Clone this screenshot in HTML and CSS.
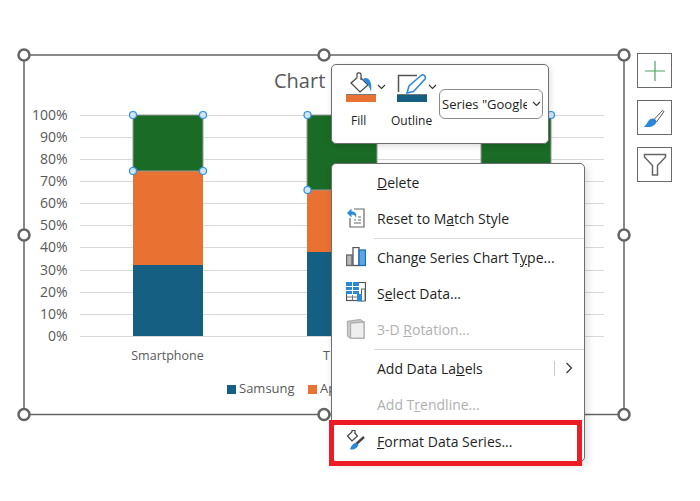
FILE: index.html
```html
<!DOCTYPE html>
<html lang="en">
<head>
<meta charset="utf-8">
<title>Chart context menu</title>
<link rel="stylesheet" href="styles.css">
</head>
<body>
<div class="stage">
  <svg class="chart" width="700" height="501" viewBox="0 0 700 501">
    <rect class="frame" x="24" y="55" width="600" height="359.5"/>
    <text class="title" x="274" y="88">Chart</text>
    <g class="grid">
      <path d="M80 115.500H604M80 137.500H604M80 159.500H604M80 181.500H604M80 203.500H604M80 225.500H604M80 247.500H604M80 270.500H604M80 292.500H604M80 314.500H604M80 336.500H604"/>
    </g>
    <g class="axis">
      <text x="67.500" y="119.500">100%</text><text x="67.500" y="141.500">90%</text><text x="67.500" y="164">80%</text>
      <text x="67.500" y="186">70%</text><text x="67.500" y="208">60%</text><text x="67.500" y="230">50%</text>
      <text x="67.500" y="252">40%</text><text x="67.500" y="275">30%</text><text x="67.500" y="297">20%</text>
      <text x="67.500" y="319">10%</text><text x="67.500" y="341">0%</text>
    </g>
    <rect class="c-green" x="133" y="115" width="70" height="56"/>
    <rect class="c-orange" x="133" y="171" width="70" height="94"/>
    <rect class="c-blue" x="133" y="265" width="70" height="71"/>
    <rect class="c-green" x="307" y="115" width="70" height="75"/>
    <rect class="c-orange" x="307" y="190" width="70" height="62"/>
    <rect class="c-blue" x="307" y="252" width="70" height="84"/>
    <rect class="c-green" x="481" y="115" width="70" height="60"/>
    <rect class="sel" x="133" y="115" width="70" height="56"/>
    <rect class="sel" x="307" y="115" width="70" height="75"/>
    <rect class="sel" x="481" y="115" width="70" height="60"/>
    <text class="cat" x="167.500" y="360">Smartphone</text>
    <text class="cat-start" x="323" y="360">T</text>
    <rect class="c-blue" x="227" y="385" width="9" height="9"/>
    <text class="legend" x="239" y="393">Samsung</text>
    <rect class="c-orange" x="308" y="385" width="9" height="9"/>
    <text class="legend" x="320" y="393">Apple</text>
    <g class="pt">
      <circle cx="133" cy="115" r="3.500"/><circle cx="203" cy="115" r="3.500"/>
      <circle cx="133" cy="171" r="3.500"/><circle cx="203" cy="171" r="3.500"/>
      <circle cx="307.500" cy="115" r="3.500"/><circle cx="307.500" cy="190" r="3.500"/>
      <circle cx="551" cy="115" r="3.500"/>
    </g>
    <g class="hd">
      <circle cx="24" cy="55" r="5.500"/><circle cx="324" cy="55" r="5.500"/><circle cx="624" cy="55" r="5.500"/>
      <circle cx="24" cy="235" r="5.500"/><circle cx="624" cy="235" r="5.500"/>
      <circle cx="24" cy="414.500" r="5.500"/><circle cx="324" cy="414.500" r="5.500"/><circle cx="624" cy="414.500" r="5.500"/>
    </g>
  </svg>

  <div class="side">
    <div class="side-btn">
      <svg width="22" height="22" viewBox="0 0 22 22"><path class="s-plus" d="M11 1V21M1 11H21"/></svg>
    </div>
    <div class="side-btn">
      <svg width="26" height="26" viewBox="0 0 26 26"><path class="s-handle" d="M11.500 15L20.500 5.500L22 6.500L14.500 17"/><path class="s-brush" d="M1.500 21.500C5 20.500 5 16 8.500 14C11 12.500 14 14 14.500 16.500C14 20 10 22 6 22C4 22 2.500 22 1.500 21.500Z"/></svg>
    </div>
    <div class="side-btn">
      <svg width="26" height="26" viewBox="0 0 26 26"><path class="s-filter" d="M2.500 2.500H23.500V5L15.500 13.500V23H10.500V13.500L2.500 5Z"/></svg>
    </div>
  </div>

  <div class="mini">
    <div class="tool">
      <div class="tool-top">
        <svg class="tool-icon" width="32" height="32" viewBox="0 0 32 32">
          <path class="i-dark" d="M5 11L13 4L22 13L14 20Z"/>
          <path class="i-dark" d="M11 5.500V2C11 .5 15 .5 15 2V8"/>
          <path class="i-blue" d="M17 7C21 4 27 8 25 20C24 15 21 11 19 9.500Z"/>
          <rect class="c-orange" x="0" y="22" width="30" height="8"/>
          <rect class="i-grey" x="0" y="22" width="30" height="1"/>
        </svg>
        <svg class="chev" width="9" height="6" viewBox="0 0 9 6"><path d="M1 1L4.500 4.500L8 1"/></svg>
      </div>
      <span class="tool-label">Fill</span>
    </div>
    <div class="tool tool-outline">
      <div class="tool-top">
        <svg class="tool-icon" width="32" height="32" viewBox="0 0 32 32">
          <path class="i-frame-d" d="M1.500 20V3.500H20"/>
          <path class="i-pen" d="M10 21L12 14L24 3.500C26 1.500 29.500 4 28 7L16.500 19.500Z"/>
          <rect class="c-blue" x="0" y="22" width="30" height="8"/>
          <rect class="i-grey" x="0" y="22" width="30" height="1"/>
        </svg>
        <svg class="chev" width="9" height="6" viewBox="0 0 9 6"><path d="M1 1L4.500 4.500L8 1"/></svg>
      </div>
      <span class="tool-label">Outline</span>
    </div>
    <div class="series">
      <span class="series-text">Series "Google</span>
      <svg class="chev" width="9" height="6" viewBox="0 0 9 6"><path d="M1 1L4.500 4.500L8 1"/></svg>
    </div>
  </div>

  <div class="menu">
    <div class="item"><span class="ic"></span><span><u>D</u>elete</span></div>
    <div class="item">
      <span class="ic"><svg width="20" height="20" viewBox="0 0 20 20"><path class="i-frame" d="M8 1H18V19H4V10"/><path class="i-bluefill" d="M1 5L5.500 .5V3.500C9.500 3.500 11 6 10 10C9.500 7.500 8 6.500 5.500 6.500V9.500Z"/><path class="i-frame" d="M12 9H15M8 12H10M12 12H15M8 15H15"/></svg></span>
      <span>Reset to M<u>a</u>tch Style</span>
    </div>
    <div class="sep"></div>
    <div class="item">
      <span class="ic"><svg width="20" height="20" viewBox="0 0 20 20"><rect class="i-bar-g" x="0.500" y="8" width="5.500" height="10.500"/><rect class="i-bar-w" x="7" y="0.500" width="6" height="18"/><rect class="i-bar-b" x="13" y="3" width="6.500" height="15.500"/></svg></span>
      <span>Change Series Chart T<u>y</u>pe...</span>
    </div>
    <div class="item">
      <span class="ic"><svg class="ic-up" width="20" height="20" viewBox="0 0 20 20"><rect class="i-tbl" x="0.500" y="0.500" width="19" height="18"/><rect class="i-bluefill" x="0" y="0" width="13" height="12"/><path class="i-white" d="M0 4.500H13M0 8.500H13M6.500 0V12"/><path class="i-tbl-l" d="M1 15H11M6.500 13V18"/><rect class="i-white-f" x="15.500" y="7" width="3.500" height="12"/><rect class="i-bluefill" x="11" y="12" width="5" height="7.500"/></svg></span>
      <span>S<u>e</u>lect Data...</span>
    </div>
    <div class="item off">
      <span class="ic"><svg width="20" height="20" viewBox="0 0 20 20"><path class="i-3d" d="M1.500 2.500L14 .5L18 3V19L5 19.500L1.500 17Z"/><path class="i-3d-f" d="M4.500 4L18 3V19L4.500 19.500Z"/></svg></span>
      <span>3-D <u>R</u>otation...</span>
    </div>
    <div class="sep"></div>
    <div class="item">
      <span class="ic"></span><span class="grow">Add Data La<u>b</u>els</span>
      <span class="sub"><svg width="8" height="12" viewBox="0 0 8 12"><path d="M1.500 1L6.500 6L1.500 11"/></svg></span>
    </div>
    <div class="item off"><span class="ic"></span><span>Add T<u>r</u>endline...</span></div>
    <div class="item item-last">
      <span class="ic"><svg width="22" height="22" viewBox="0 0 22 22"><path class="i-dark2" d="M1.500 6L7 1L11.500 6L6 11Z"/><path class="i-dark2" d="M6 2V.5H9V4"/><path class="i-stem" d="M8 16L18 7"/><path class="i-bluefill" d="M4 19.500C5 16 7 13 10 13C12 13.500 13 15 12 16C10 19 7 20 4 19.500Z"/></svg></span>
      <span><u>F</u>ormat Data Series...</span>
    </div>
  </div>
  <div class="callout"></div>
</div>
</body>
</html>
```
FILE: styles.css
```css
* { box-sizing: border-box; }
html, body { margin: 0; padding: 0; background: #fff; }
body { width: 700px; height: 501px; overflow: hidden; font-family: "Open Sans", "Noto Sans", sans-serif; }
.stage { position: relative; width: 700px; height: 501px; overflow: hidden; }
.chart { display: block; }
.frame { fill: #fff; stroke: #646464; stroke-width: 1.5; }
.title { font: 20px "Open Sans", sans-serif; fill: #595959; }
.grid path { stroke: #d9d9d9; stroke-width: 1; fill: none; }
.axis text { font: 14px "Open Sans", sans-serif; fill: #595959; text-anchor: end; }
.cat { font: 12.500px "Open Sans", sans-serif; fill: #595959; text-anchor: middle; }
.cat-start { font: 12.500px "Open Sans", sans-serif; fill: #595959; }
.legend { font: 13px "Open Sans", sans-serif; fill: #595959; }
.c-green { fill: #1a6b26; }
.c-orange { fill: #e97132; }
.c-blue { fill: #156082; }
.sel { fill: none; stroke: #999; stroke-width: 1; }
.pt circle { fill: #cfe6fa; stroke: #2f8fe0; stroke-width: 1.2; }
.hd circle { fill: #fff; stroke: #646464; stroke-width: 2.500; }

.side { position: absolute; left: 637px; top: 53px; display: flex; flex-direction: column; gap: 12px; }
.side-btn { width: 35px; height: 35px; border: 1px solid #6a6a6a; background: #fff; display: flex; align-items: center; justify-content: center; }
.s-plus { stroke: #4aa564; stroke-width: 1.200; fill: none; }
.s-handle { fill: #fff; stroke: #555; stroke-width: 1; }
.s-brush { fill: #2b88d8; }
.s-filter { fill: #fff; stroke: #666; stroke-width: 1.500; }

.mini { position: absolute; left: 331px; top: 64px; width: 218px; height: 80px; background: #fff; border: 1px solid #6e6e6e; border-radius: 5px; display: flex; align-items: flex-start; padding: 7px 4px 0 14px; box-shadow: 1px 2px 6px rgba(0,0,0,.14); }
.tool { display: flex; flex-direction: column; align-items: flex-start; width: 51px; }
.tool-outline { width: 41px; }
.tool-top { display: flex; align-items: center; }
.tool-icon { display: block; flex: none; }
.tool-top .chev { margin-left: -1px; margin-top: -2px; flex: none; }
.tool-label { font-size: 12px; line-height: 17px; color: #222; margin-top: 8px; margin-left: 5px; }
.tool-outline .tool-label { margin-left: -6px; }
.i-dark { fill: #fff; stroke: #444; stroke-width: 1.200; }
.i-frame-d { fill: none; stroke: #555; stroke-width: 1.500; }
.i-blue { fill: #2b88d8; }
.i-grey { fill: #777; }
.i-pen { fill: #fff; stroke: #2b88d8; stroke-width: 1.500; }
.chev { fill: none; stroke: #333; stroke-width: 1.100; display: block; flex: none; }
.series { margin-top: 17px; margin-left: 1px; width: 104px; height: 30px; border: 1px solid #8a8a8a; border-radius: 6px; display: flex; align-items: center; justify-content: space-between; padding: 0 1px 0 2px; font-size: 13px; color: #222; }
.series-text { width: 85px; overflow: hidden; white-space: nowrap; }

.menu { position: absolute; left: 331px; top: 163px; width: 254px; height: 299px; background: #fff; border: 1px solid #6e6e6e; border-radius: 5px; display: flex; flex-direction: column; box-shadow: 2px 3px 8px rgba(0,0,0,.15); }
.item { display: flex; align-items: center; height: 36px; font-size: 14px; color: #1f1f1f; white-space: nowrap; padding-right: 8px; flex: none; }
.item-last { height: 38px; }
.ic { width: 45px; flex: none; padding-left: 14px; display: flex; align-items: center; }
.ic svg { display: block; flex: none; }
.ic-up { margin-top: -2px; }
.grow { flex: 1; }
.off { color: #b0b0b0; }
.sep { height: 1px; background: #d6d6d6; margin: 2px 0 0 42px; flex: none; }
.sub { border-left: 1px solid #c8c8c8; height: 15px; width: 19px; display: flex; align-items: center; justify-content: flex-end; margin-right: 3px; }
.sub svg { fill: none; stroke: #333; stroke-width: 1.200; display: block; }
.callout { position: absolute; left: 329px; top: 420px; width: 253px; height: 46px; border: 5px solid #ed1c24; }
.i-frame { fill: none; stroke: #666; stroke-width: 1.200; }
.i-bluefill { fill: #2b88d8; }
.i-bar-g { fill: #b8b8b8; stroke: #666; stroke-width: 1.300; }
.i-bar-w { fill: #fff; stroke: #555; stroke-width: 1.300; }
.i-bar-b { fill: #5aa6e6; stroke: #1b6fb8; stroke-width: 1.300; }
.i-tbl { fill: #fff; stroke: #555; stroke-width: 1.200; }
.i-white { stroke: #fff; fill: none; }
.i-tbl-l { stroke: #777; fill: none; }
.i-white-f { fill: #fff; stroke: #555; stroke-width: .9; }
.i-3d { fill: #d0d0d0; stroke: #b0b0b0; stroke-width: 1.300; }
.i-3d-f { fill: #efefef; stroke: #b0b0b0; stroke-width: 1.300; }
.i-dark2 { fill: #fff; stroke: #444; stroke-width: 1.200; }
.i-stem { fill: none; stroke: #444; stroke-width: 2.400; }
```
